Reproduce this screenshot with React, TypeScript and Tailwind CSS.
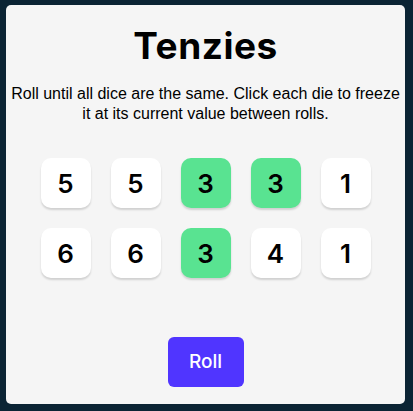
import { useState } from "react";

type Die = { id: number; value: number; isHeld: boolean };

const INITIAL_DICE: Die[] = [
  { id: 1, value: 5, isHeld: false },
  { id: 2, value: 5, isHeld: false },
  { id: 3, value: 3, isHeld: true },
  { id: 4, value: 3, isHeld: true },
  { id: 5, value: 1, isHeld: false },
  { id: 6, value: 6, isHeld: false },
  { id: 7, value: 6, isHeld: false },
  { id: 8, value: 3, isHeld: true },
  { id: 9, value: 4, isHeld: false },
  { id: 10, value: 1, isHeld: false },
];

export default function App() {
  const [dice, setDice] = useState<Die[]>(INITIAL_DICE);

  const holdDie = (id: number) => {
    setDice((prev) => prev.map((d) => (d.id === id ? { ...d, isHeld: !d.isHeld } : d)));
  };

  const rollDice = () => {
    setDice((prev) =>
      prev.map((d) => (d.isHeld ? d : { ...d, value: Math.ceil(Math.random() * 6) }))
    );
  };

  return (
    <div className="w-[413px] h-[411px] bg-[#0B2434] pt-[5px] pl-[6px]">
      <main className="w-[399px] h-[399px] bg-[#F5F5F5] rounded-[5px] flex flex-col items-center">
        {/* タイトル */}
        <h1 className="mt-[22px] text-[37px] leading-none font-bold text-black tracking-[0.5px] font-['Inter',sans-serif]">
          Tenzies
        </h1>
        <p className="mt-[20px] px-[4px] text-center text-[16px] leading-[20px] text-black font-['Liberation_Sans',Arial,sans-serif]">
          Roll until all dice are the same. Click each die to freeze it at its current value between rolls.
        </p>

        {/* ダイス */}
        <div className="mt-[34px] grid grid-cols-5 gap-[20px]">
          {dice.map((die) => (
            <button
              key={die.id}
              onClick={() => holdDie(die.id)}
              className={`w-[50px] h-[50px] rounded-[10px] shadow-[0px_2px_2px_rgba(0,0,0,0.15)] flex items-center justify-center text-[26px] font-semibold text-black font-['Inter',sans-serif] ${
                die.isHeld ? "bg-[#59E391]" : "bg-white"
              }`}
            >
              {die.value}
            </button>
          ))}
        </div>

        <button
          onClick={rollDice}
          className="mt-[59px] w-[76px] h-[50px] rounded-[6px] bg-[#5035FF] text-white text-[19px] font-medium font-['Inter',sans-serif]"
        >
          Roll
        </button>
      </main>
    </div>
  );
}
